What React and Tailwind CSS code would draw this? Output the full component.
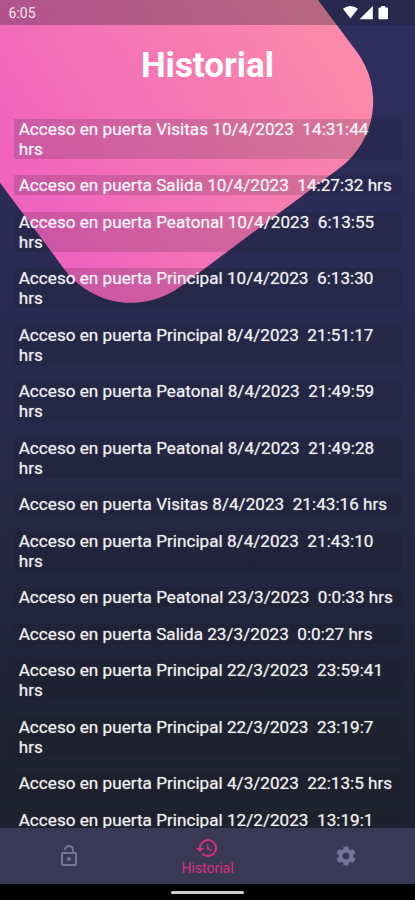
import { MdHistory, MdLockOpen, MdSettings } from 'react-icons/md';

const accesos = [
  { puerta: 'Visitas', fecha: '10/4/2023', hora: '14:31:44' },
  { puerta: 'Salida', fecha: '10/4/2023', hora: '14:27:32' },
  { puerta: 'Peatonal', fecha: '10/4/2023', hora: '6:13:55' },
  { puerta: 'Principal', fecha: '10/4/2023', hora: '6:13:30' },
  { puerta: 'Principal', fecha: '8/4/2023', hora: '21:51:17' },
  { puerta: 'Peatonal', fecha: '8/4/2023', hora: '21:49:59' },
  { puerta: 'Peatonal', fecha: '8/4/2023', hora: '21:49:28' },
  { puerta: 'Visitas', fecha: '8/4/2023', hora: '21:43:16' },
  { puerta: 'Principal', fecha: '8/4/2023', hora: '21:43:10' },
  { puerta: 'Peatonal', fecha: '23/3/2023', hora: '0:0:33' },
  { puerta: 'Salida', fecha: '23/3/2023', hora: '0:0:27' },
  { puerta: 'Principal', fecha: '22/3/2023', hora: '23:59:41' },
  { puerta: 'Principal', fecha: '22/3/2023', hora: '23:19:7' },
  { puerta: 'Principal', fecha: '4/3/2023', hora: '22:13:5' },
  { puerta: 'Principal', fecha: '12/2/2023', hora: '13:19:1' },
];

function Background() {
  return (
    <svg className="absolute left-0 top-0" width="415" height="320" viewBox="0 0 415 320" fill="none">
      <defs>
        <linearGradient id="pink" gradientUnits="userSpaceOnUse" x1="20" y1="240" x2="360" y2="30">
          <stop offset="0" stopColor="#ee60c0" />
          <stop offset="1" stopColor="#fe8ca9" />
        </linearGradient>
      </defs>
      <path
        d="M0 0H318L356.6 51.5A83 83 0 0 1 340 167.7L180.6 286.5A83 83 0 0 1 64.9 269.9L0 182.7Z"
        fill="url(#pink)"
      />
    </svg>
  );
}

function StatusBar() {
  return (
    <div className="flex h-[25px] shrink-0 items-center justify-between bg-[#1c1c24]/30 pl-[8.5px] pr-[26px] text-[14px] text-white/85">
      <span className="pt-px">6:05</span>
      <svg width="48" height="25" viewBox="0 0 48 25" fill="#fff">
        <path d="M1.9 8.7Q9.4 3.3 16.9 8.7L9.4 18.6Z" />
        <path d="M31.8 6V19.3H18.6Z" />
        <path d="M38.5 7.4H40.2V6H44.2V7.4H46A1 1 0 0 1 47 8.4V18.3A1 1 0 0 1 46 19.3H38.5A1 1 0 0 1 37.5 18.3V8.4A1 1 0 0 1 38.5 7.4Z" />
      </svg>
    </div>
  );
}

function AccesoItem({ acceso }) {
  return (
    <li className="whitespace-pre-wrap bg-[#18161c]/16 pl-[4.7px] pr-[7px] text-[17.15px] leading-5 text-white/85 [text-shadow:0_0_1px_rgba(255,255,255,0.65)]">
      {`Acceso en puerta ${acceso.puerta} ${acceso.fecha}  ${acceso.hora} hrs`}
    </li>
  );
}

function TabBar() {
  return (
    <nav className="flex h-[56.5px] shrink-0 items-center bg-[#393957] text-[#74749a]">
      <div className="flex flex-1 justify-center">
        <MdLockOpen size={24} />
      </div>
      <div className="flex flex-1 flex-col items-center text-[#d92d78]">
        <MdHistory size={24} />
        <span className="text-[14px] leading-4">Historial</span>
      </div>
      <div className="flex flex-1 justify-center">
        <MdSettings size={24} />
      </div>
    </nav>
  );
}

export default function App() {
  return (
    <div className="relative h-[900px] w-full overflow-hidden bg-linear-to-b from-[#2e2f60] via-[#27294c] via-45% to-[#1f2230] to-85% font-[Roboto,sans-serif]">
      <Background />
      <div className="relative flex h-full flex-col">
        <StatusBar />
        <h1 className="mt-[20.5px] shrink-0 text-center text-[35px] font-bold leading-10 text-white">Historial</h1>
        <ul className="mt-[33px] flex min-h-0 flex-1 flex-col gap-[16.5px] overflow-hidden pl-[14px] pr-[13px]">
          {accesos.map((acceso) => (
            <AccesoItem key={acceso.fecha + acceso.hora} acceso={acceso} />
          ))}
        </ul>
        <TabBar />
        <div className="flex h-4 shrink-0 items-center justify-center bg-black">
          <div className="mt-px h-[3px] w-[73px] rounded-full bg-[#cfcfcf]" />
        </div>
      </div>
    </div>
  );
}
